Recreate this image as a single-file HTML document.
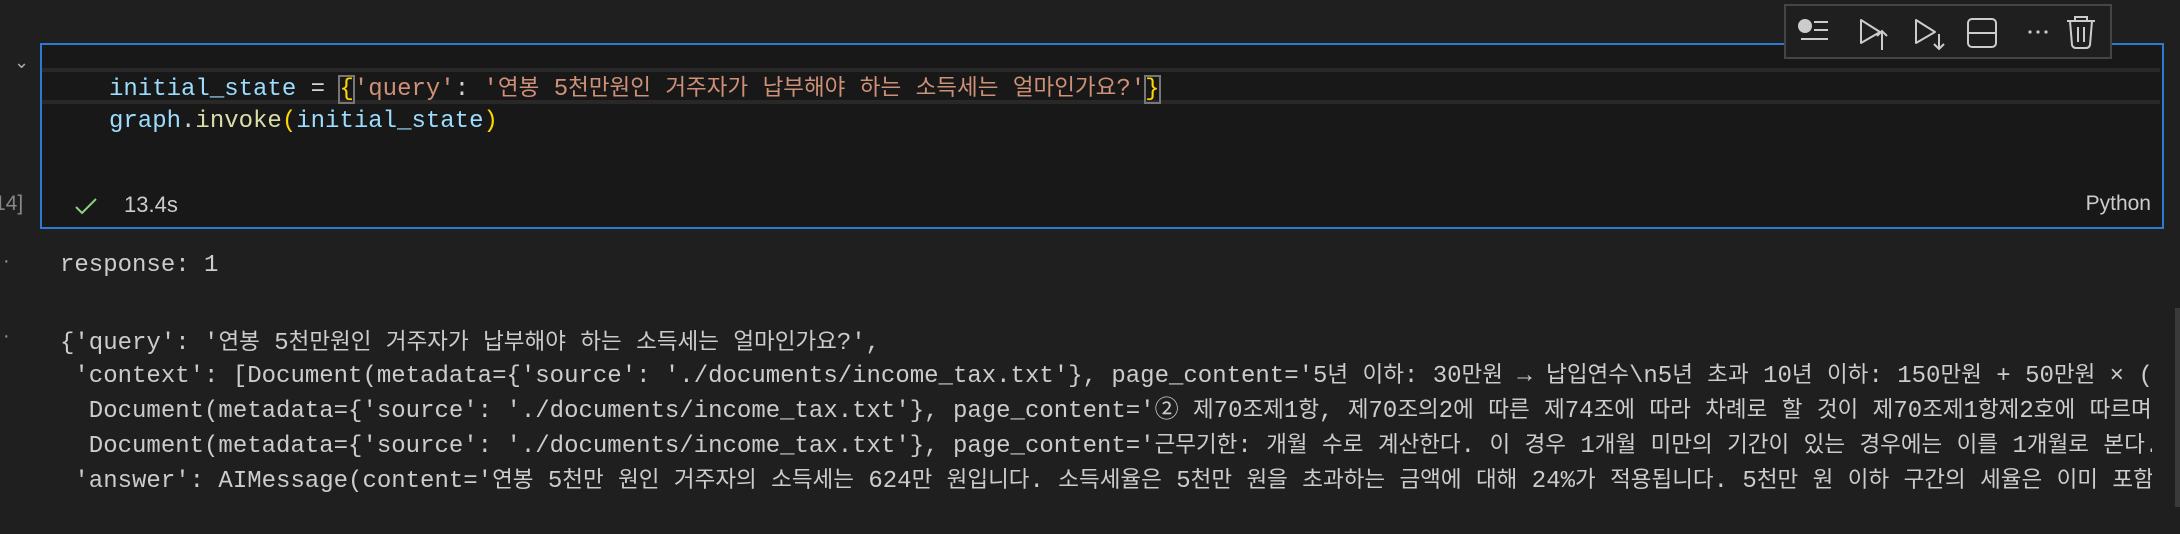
<!DOCTYPE html>
<html><head><meta charset="utf-8"><style>
html,body{margin:0;padding:0;background:#1f1f1f;width:2180px;height:534px;overflow:hidden;position:relative}
.m{font-family:"Liberation Mono","Noto Sans CJK KR",monospace;font-size:24px;white-space:pre;position:absolute;line-height:35px}
.k{font-family:"Noto Sans CJK KR","NanumGothic",sans-serif;font-size:22.5px}
.cell{position:absolute;left:40px;top:43px;width:2120px;height:182px;border:2px solid #2f7ad1;background:#181818}
.hl{position:absolute;left:42px;top:68px;width:2118px;height:36px;border-top:4px solid #282828;border-bottom:4px solid #282828;box-sizing:border-box}
.v{color:#9cdcfe}.o{color:#d4d4d4}.b{color:#ffd700}.s{color:#ce9178}.f{color:#dcdcaa}
.out{color:#cccccc;left:60px;width:2092px;overflow:hidden}
.sans{font-family:"Liberation Sans",sans-serif;position:absolute;color:#cccccc}
</style></head><body>
<div class="cell"></div>
<div class="hl"></div>
<div class="m" style="left:109px;top:69px"><span class="v">initial_state</span><span class="o"> = </span><span class="b" style="outline:2px solid #777;outline-offset:-1px">{</span><span class="s">'query'</span><span class="o">: </span><span class="s">'연봉 5천만원인 거주자가 납부해야 하는 소득세는 얼마인가요?'</span><span class="b" style="outline:2px solid #777;outline-offset:-1px">}</span></div>
<div class="m" style="left:109px;top:104px"><span class="v">graph</span><span class="o">.</span><span class="f">invoke</span><span class="b">(</span><span class="v">initial_state</span><span class="b">)</span></div>
<div class="sans" style="left:14px;top:52px;font-size:18px;color:#aaa">⌄</div>
<div class="sans" style="left:-8px;top:52px;font-size:18px;color:#aaa">›</div>
<svg style="position:absolute;left:74px;top:196px" width="24" height="20"><path d="M2 11 L8 17 L22 3" stroke="#89d185" stroke-width="2" fill="none"/></svg>
<div class="sans" style="left:124px;top:192px;font-size:22px">13.4s</div>
<div class="sans" style="left:-6px;top:192px;font-size:21px;color:#888">14]</div>
<div class="sans" style="right:29px;top:192px;font-size:21px">Python</div>
<div class="sans" style="left:3px;top:250px;font-size:20px;color:#999">·</div>
<div class="sans" style="left:3px;top:325px;font-size:20px;color:#999">·</div>
<div class="m out" style="top:248px">response: 1</div>
<div class="m out" style="top:323px">{'query': '연봉 5천만원인 거주자가 납부해야 하는 소득세는 얼마인가요?',</div>
<div class="m out" style="top:356px"> 'context': [Document(metadata={'source': './documents/income_tax.txt'}, page_content='5년 이하: 30만원 → 납입연수\n5년 초과 10년 이하: 150만원 + 50만원 × (납</div>
<div class="m out" style="top:391px">  Document(metadata={'source': './documents/income_tax.txt'}, page_content='② 제70조제1항, 제70조의2에 따른 제74조에 따라 차례로 할 것이 제70조제1항제2호에 따르며</div>
<div class="m out" style="top:426px">  Document(metadata={'source': './documents/income_tax.txt'}, page_content='근무기한: 개월 수로 계산한다. 이 경우 1개월 미만의 기간이 있는 경우에는 이를 1개월로 본다.</div>
<div class="m out" style="top:461px"> 'answer': AIMessage(content='연봉 5천만 원인 거주자의 소득세는 624만 원입니다. 소득세율은 5천만 원을 초과하는 금액에 대해 24%가 적용됩니다. 5천만 원 이하 구간의 세율은 이미 포함되</div>
<div style="position:absolute;left:2175px;top:308px;width:5px;height:199px;background:#3a3a3a"></div>
<div style="position:absolute;left:1784px;top:4px;width:324px;height:51px;border:2px solid #454545;background:#1f1f1f"></div>
<svg style="position:absolute;left:1784px;top:4px" width="330" height="56" fill="none" stroke="#cccccc" stroke-width="2">
<circle cx="21" cy="22" r="7" fill="#cccccc" stroke="none"/>
<path d="M30 18H44M30 26H44M17 35H44"/>
<path d="M77 16V39L96 28Z" stroke-linejoin="round"/><path d="M98 27V46M93 32L98 27L103 32"/>
<path d="M132 16V39L151 28Z" stroke-linejoin="round"/><path d="M155 30V45M150 40L155 45L160 40"/>
<rect x="184" y="15" width="28" height="28" rx="4"/><path d="M184 29H212"/>
<circle cx="246" cy="28" r="1.6" fill="#ccc" stroke="none"/><circle cx="254" cy="28" r="1.6" fill="#ccc" stroke="none"/><circle cx="262" cy="28" r="1.6" fill="#ccc" stroke="none"/>
<path d="M283 17H311M291 17V13H303V17M286 17L288 41Q289 44 292 44H302Q305 44 306 41L308 17M294 23V38M300 23V38"/>
</svg>
<script>
(function(){var w=document.createTreeWalker(document.body,NodeFilter.SHOW_TEXT),n,a=[];while(n=w.nextNode()){if(n.parentNode.tagName!=='SCRIPT'&&/[\uAC00-\uD7A3②→×]/.test(n.nodeValue))a.push(n);}
a.forEach(function(t){var s=document.createElement('span');s.innerHTML=t.nodeValue.replace(/&/g,'&amp;').replace(/</g,'&lt;').replace(/([\uAC00-\uD7A3]+)/g,'<span class="k">$1</span>');t.parentNode.replaceChild(s,t);});})();
</script>
</body></html>
